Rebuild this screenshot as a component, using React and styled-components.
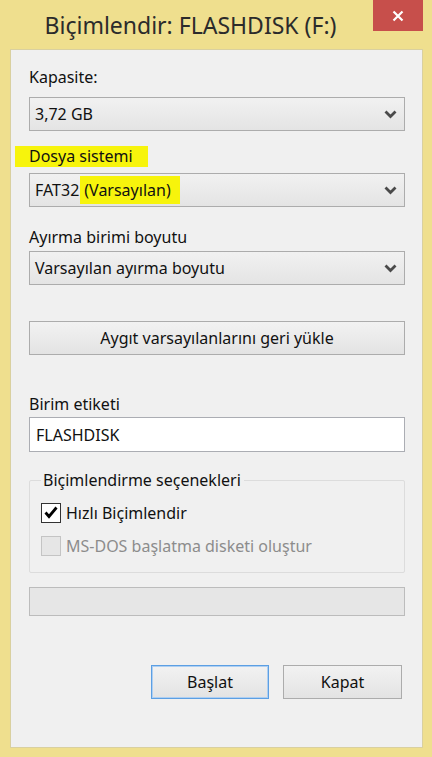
import React from "react";
import styled, { createGlobalStyle } from "styled-components";

const GlobalStyle = createGlobalStyle`
  html, body {
    margin: 0;
    padding: 0;
    background: #efdf8e;
  }
  * {
    box-sizing: border-box;
  }
`;

const Window = styled.div`
  width: 432px;
  height: 757px;
  background: #efdf8e;
  display: flex;
  flex-direction: column;
  font-family: "Noto Sans", "Open Sans", sans-serif;
  font-size: 16px;
  color: #111;
`;

const TitleBar = styled.div`
  height: 49px;
  display: flex;
  align-items: flex-start;
`;

const Title = styled.div`
  flex: 1;
  text-align: center;
  padding: 10px 0 0 8px;
  font-size: 23px;
  color: #2b2b2b;
  line-height: 30px;
`;

const CloseButton = styled.div`
  width: 50px;
  height: 31px;
  margin-right: 9px;
  background: #c74f4b;
  display: flex;
  align-items: center;
  justify-content: center;
`;

const Panel = styled.div`
  flex: 1;
  margin: 0 9px 9px 10px;
  background: #f0f0f0;
  border: 1px solid #d9d0a0;
  padding: 0 17px 0 18px;
  display: flex;
  flex-direction: column;
`;

const Label = styled.div`
  height: 20px;
  line-height: 20px;
  margin-top: ${(p) => p.$top || 0}px;
  display: flex;
  align-items: center;
`;

const Marker = styled.span`
  background: #f7f40c;
  margin-left: -14px;
  padding: 0 15px 0 14px;
  line-height: 21px;
`;

const InlineMarker = styled.span`
  background: #f7f40c;
  padding: 3px 9px 3px 4px;
  margin-left: 1px;
`;

const Select = styled.div`
  height: 34px;
  margin-top: ${(p) => p.$top || 0}px;
  border: 1px solid #acacac;
  background: linear-gradient(#f1f1f1, #e4e4e4);
  display: flex;
  align-items: center;
  justify-content: space-between;
  padding: 0 7px 0 5px;
`;

const Button = styled.div`
  height: ${(p) => p.$height || 34}px;
  margin-top: ${(p) => p.$top || 0}px;
  border: 1px solid ${(p) => (p.$default ? "#5c9fe3" : "#acacac")};
  box-shadow: ${(p) => (p.$default ? "inset 0 0 0 1px #aecff2" : "none")};
  background: linear-gradient(#f2f2f2, #e3e3e3);
  display: flex;
  align-items: center;
  justify-content: center;
  width: ${(p) => (p.$width ? `${p.$width}px` : "auto")};
`;

const TextInput = styled.div`
  height: 35px;
  margin-top: ${(p) => p.$top || 0}px;
  border: 1px solid #abadb3;
  background: #fff;
  display: flex;
  align-items: center;
  padding: 0 6px;
`;

const Group = styled.fieldset`
  margin: 18px 0 0 0;
  padding: 12px 12px 0 11px;
  height: 103px;
  border: 1px solid #dcdcdc;
  border-radius: 2px;
  display: flex;
  flex-direction: column;
  gap: 12px;
`;

const Legend = styled.legend`
  padding: 0 3px 0 2px;
  margin-left: 0;
  font-size: 16px;
  line-height: 20px;
`;

const CheckRow = styled.div`
  display: flex;
  align-items: center;
  gap: 5px;
  height: 21px;
  color: ${(p) => (p.$disabled ? "#8c8c8c" : "#111")};
`;

const Box = styled.div`
  width: 20px;
  height: 20px;
  border: 1px solid ${(p) => (p.$disabled ? "#c4c4c4" : "#333")};
  background: ${(p) => (p.$disabled ? "#e6e6e6" : "#fff")};
  display: flex;
  align-items: center;
  justify-content: center;
`;

const Progress = styled.div`
  height: 29px;
  margin-top: 14px;
  border: 1px solid #bcbcbc;
  background: #e6e6e6;
`;

const Footer = styled.div`
  margin-top: 49px;
  display: flex;
  justify-content: flex-end;
  gap: 14px;
  padding-right: 3px;
`;

const Chevron = () => (
  <svg width="13" height="9" viewBox="0 0 13 9">
    <path d="M1.5 1.5 L6.5 6.5 L11.5 1.5" fill="none" stroke="#4a4a4a" strokeWidth="2.8" />
  </svg>
);

const Check = () => (
  <svg width="14" height="13" viewBox="0 0 14 13">
    <path d="M1.5 6.5 L5 10.5 L12.5 1.5" fill="none" stroke="#000" strokeWidth="2.8" />
  </svg>
);

const App = () => {
  return (
    <Window>
      <GlobalStyle />
      <TitleBar>
        <Title>Biçimlendir: FLASHDISK (F:)</Title>
        <CloseButton>
          <svg width="12" height="12" viewBox="0 0 12 12">
            <path d="M1.5 1.5 L10.5 10.5 M10.5 1.5 L1.5 10.5" stroke="#fff" strokeWidth="2.2" />
          </svg>
        </CloseButton>
      </TitleBar>
      <Panel>
        <Label $top={17}>Kapasite:</Label>
        <Select $top={10}>
          <span>3,72 GB</span>
          <Chevron />
        </Select>
        <Label $top={15}>
          <Marker>Dosya sistemi</Marker>
        </Label>
        <Select $top={7}>
          <span>
            FAT32<InlineMarker>(Varsayılan)</InlineMarker>
          </span>
          <Chevron />
        </Select>
        <Label $top={20}>Ayırma birimi boyutu</Label>
        <Select $top={4}>
          <span>Varsayılan ayırma boyutu</span>
          <Chevron />
        </Select>
        <Button $top={36}>Aygıt varsayılanlarını geri yükle</Button>
        <Label $top={39}>Birim etiketi</Label>
        <TextInput $top={3}>FLASHDISK</TextInput>
        <Group>
          <Legend>Biçimlendirme seçenekleri</Legend>
          <CheckRow>
            <Box>
              <Check />
            </Box>
            Hızlı Biçimlendir
          </CheckRow>
          <CheckRow $disabled>
            <Box $disabled />
            MS-DOS başlatma disketi oluştur
          </CheckRow>
        </Group>
        <Progress />
        <Footer>
          <Button $default $width={118}>
            Başlat
          </Button>
          <Button $width={119}>Kapat</Button>
        </Footer>
      </Panel>
    </Window>
  );
};

export default App;
